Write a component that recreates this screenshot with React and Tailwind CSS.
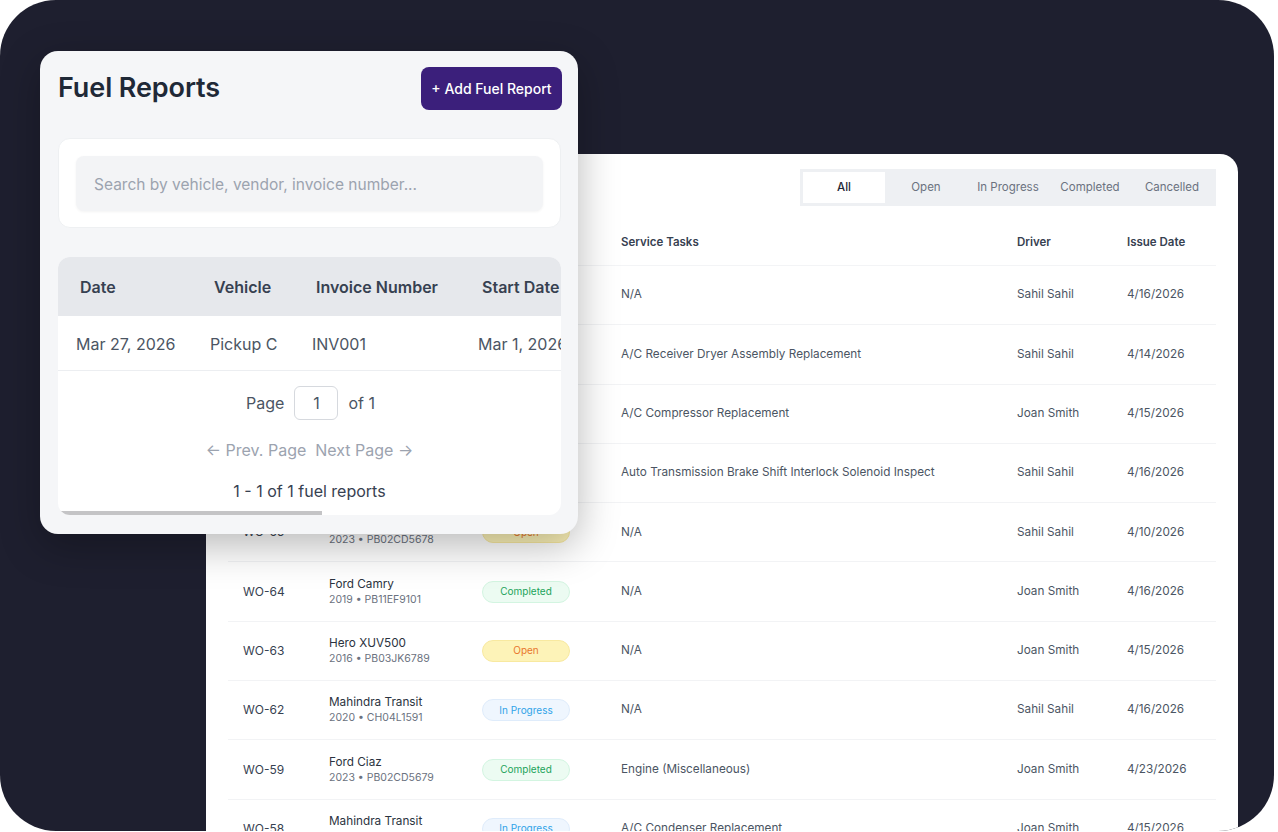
import React from "react";

const rows = [
  { wo: "WO-69", name: "Mahindra Transit", sub: "2020 • CH04L1591", status: "Open", task: "N/A", driver: "Sahil Sahil", date: "4/16/2026" },
  { wo: "WO-68", name: "Ford Camry", sub: "2019 • PB11EF9101", status: "Completed", task: "A/C Receiver Dryer Assembly Replacement", driver: "Sahil Sahil", date: "4/14/2026" },
  { wo: "WO-67", name: "Hero XUV500", sub: "2016 • PB03JK6789", status: "In Progress", task: "A/C Compressor Replacement", driver: "Joan Smith", date: "4/15/2026" },
  { wo: "WO-66", name: "Ford Ciaz", sub: "2023 • PB02CD5679", status: "Completed", task: "Auto Transmission Brake Shift Interlock Solenoid Inspect", driver: "Sahil Sahil", date: "4/16/2026" },
  { wo: "WO-65", name: "Ford Ciaz", sub: "2023 • PB02CD5678", status: "Open", task: "N/A", driver: "Sahil Sahil", date: "4/10/2026" },
  { wo: "WO-64", name: "Ford Camry", sub: "2019 • PB11EF9101", status: "Completed", task: "N/A", driver: "Joan Smith", date: "4/16/2026" },
  { wo: "WO-63", name: "Hero XUV500", sub: "2016 • PB03JK6789", status: "Open", task: "N/A", driver: "Joan Smith", date: "4/15/2026" },
  { wo: "WO-62", name: "Mahindra Transit", sub: "2020 • CH04L1591", status: "In Progress", task: "N/A", driver: "Sahil Sahil", date: "4/16/2026" },
  { wo: "WO-59", name: "Ford Ciaz", sub: "2023 • PB02CD5679", status: "Completed", task: "Engine (Miscellaneous)", driver: "Joan Smith", date: "4/23/2026" },
  { wo: "WO-58", name: "Mahindra Transit", sub: "2020 • CH04L1591", status: "In Progress", task: "A/C Condenser Replacement", driver: "Joan Smith", date: "4/15/2026" },
];

function Badge({ status }) {
  const cls =
    status === "Completed"
      ? "bg-[#ecfbf2] border-[#d3f5e1] text-[#22a35a]"
      : status === "Open"
      ? "bg-[#fdf3b8] border-[#f8e9a0] text-[#e8772e]"
      : "bg-[#eff6fe] border-[#dfecfb] text-[#2fa3e8]";
  return (
    <span className={`inline-flex items-center justify-center w-[88px] h-[22px] rounded-full border text-[10px] ${cls}`}>
      {status}
    </span>
  );
}

const grid = "grid grid-cols-[86px_153px_139px_396px_110px_104px] items-center";

export default function App() {
  return (
    <div className="w-[1278px] h-[832px] bg-white overflow-hidden" style={{ fontFamily: "Inter, 'Noto Sans', sans-serif" }}>
      <div className="relative w-[1274px] h-[831px] bg-[#1e1f2f] rounded-[56px] overflow-hidden">
        {/* Work orders card */}
        <div className="ml-[206px] pt-[154px] w-[1032px]">
          <div className="bg-white rounded-t-[18px] h-[700px] pl-[22px] pr-[22px] pt-[15px]">
            <div className="flex justify-end">
              <div className="flex bg-[#eef0f3] p-[3px] h-[37px]">
                {["All", "Open", "In Progress", "Completed", "Cancelled"].map((t, i) => (
                  <div
                    key={t}
                    className={`w-[82px] flex items-center justify-center text-[11.5px] ${i === 0 ? "bg-white text-[#1f2937] font-medium" : "text-[#6b7280]"}`}
                  >
                    {t}
                  </div>
                ))}
              </div>
            </div>
            <div className="mt-[15px]">
              <div className={`${grid} h-[45px] border-b border-[#f3f4f6] text-[11.5px] font-semibold text-[#374151]`}>
                <div className="pl-[15px]">WO #</div>
                <div className="pl-[15px]">Vehicle</div>
                <div className="pl-[15px]">Status</div>
                <div className="pl-[15px]">Service Tasks</div>
                <div className="pl-[15px]">Driver</div>
                <div className="pl-[15px]">Issue Date</div>
              </div>
              {rows.map((r) => (
                <div key={r.wo} className={`${grid} h-[59.3px] border-b border-[#f2f3f5] text-[11.75px]`}>
                  <div className="pl-[15px] text-[#374151] text-[12px]">{r.wo}</div>
                  <div className="pl-[15px] flex flex-col leading-[16px]">
                    <span className="text-[#2b3340]">{r.name}</span>
                    <span className="text-[10.5px] text-[#6b7280]">{r.sub}</span>
                  </div>
                  <div className="pl-[15px]">
                    <Badge status={r.status} />
                  </div>
                  <div className="pl-[15px] text-[#4b5563] whitespace-nowrap">{r.task}</div>
                  <div className="pl-[15px] text-[#4b5563]">{r.driver}</div>
                  <div className="pl-[15px] text-[#4b5563]">{r.date}</div>
                </div>
              ))}
            </div>
          </div>
        </div>

        {/* Fuel reports card (floating over the table) */}
        <div className="absolute left-[40px] top-[51px] w-[538px] h-[483px] bg-[#f5f6f8] rounded-[18px] pl-[18px] pr-[17px] pt-[16px] shadow-[0_12px_40px_rgba(0,0,0,0.28)]">
          <div className="flex items-center justify-between h-[43px]">
            <h1 className="text-[27px] font-semibold text-[#1f2937] tracking-[-0.1px]">Fuel Reports</h1>
            <button className="h-[43px] w-[141px] mr-[-1px] rounded-[8px] bg-[#3b1f7b] text-white text-[14px] font-medium">
              + Add Fuel Report
            </button>
          </div>

          <div className="mt-[28px] h-[90px] bg-white rounded-[12px] border border-[#eef0f2] p-[17px]">
            <div className="h-[55px] rounded-[8px] bg-[#f3f4f6] shadow-[0_1px_3px_rgba(0,0,0,0.05)] flex items-center pl-[18px] pt-[2px] text-[15.5px] text-[#9ca3af]">
              Search by vehicle, vendor, invoice number...
            </div>
          </div>

          <div className="mt-[29px] h-[258px] bg-white rounded-[12px] overflow-hidden relative">
            <div className="flex h-[59px] bg-[#e6e8ec] text-[16px] font-semibold text-[#374151] items-center whitespace-nowrap">
              <div className="w-[134px] pl-[22px] shrink-0">Date</div>
              <div className="w-[102px] pl-[22px] shrink-0">Vehicle</div>
              <div className="w-[166px] pl-[22px] shrink-0">Invoice Number</div>
              <div className="w-[120px] pl-[22px] shrink-0">Start Date</div>
            </div>
            <div className="flex h-[55px] pt-[2px] items-center border-b border-[#eceef1] text-[16px] text-[#4b5563] whitespace-nowrap">
              <div className="w-[134px] pl-[18px] shrink-0">Mar 27, 2026</div>
              <div className="w-[102px] pl-[18px] shrink-0">Pickup C</div>
              <div className="w-[166px] pl-[18px] shrink-0">INV001</div>
              <div className="w-[120px] pl-[18px] shrink-0">Mar 1, 2026</div>
            </div>
            <div className="flex flex-col items-center text-[16px]">
              <div className="mt-[15px] flex items-center gap-[10px] text-[#4b5563] pl-[2px]">
                <span>Page</span>
                <span className="w-[44px] h-[34px] border border-[#d6d9de] rounded-[6px] flex items-center justify-center">1</span>
                <span>of 1</span>
              </div>
              <div className="mt-[19px] h-[22px] flex items-center gap-[9px] text-[#9ca3af]">
                <span>← Prev. Page</span>
                <span>Next Page →</span>
              </div>
              <div className="mt-[18px] text-[#374151]">1 - 1 of 1 fuel reports</div>
            </div>
            <div className="absolute left-0 bottom-0 w-[264px] h-[4px] bg-[#c4c4c6] rounded-bl-[12px]"></div>
          </div>
        </div>
      </div>
    </div>
  );
}
